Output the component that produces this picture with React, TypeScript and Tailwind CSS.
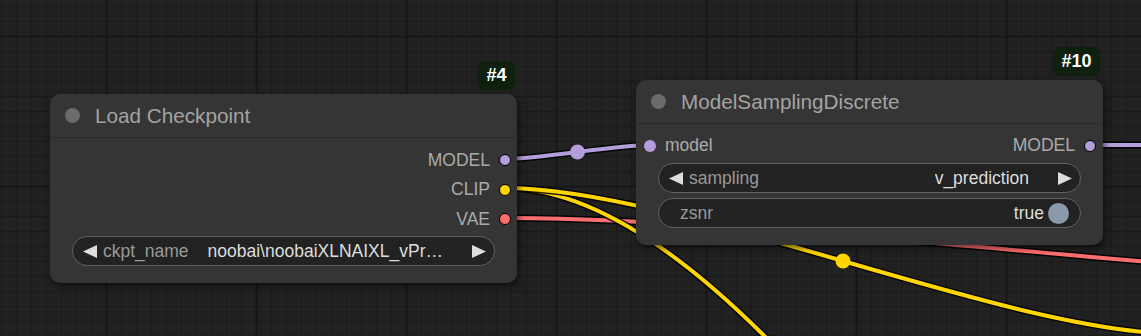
import React from "react";

const font = "font-['Liberation_Sans',Arial,sans-serif]";

function Arrow({ dir }: { dir: "left" | "right" }) {
  return (
    <svg width="14" height="13" viewBox="0 0 14 13" className="shrink-0">
      <polygon points={dir === "left" ? "14,0 14,13 0,6.5" : "0,0 0,13 14,6.5"} fill="#dddddd" />
    </svg>
  );
}

function Grid() {
  return (
    <svg className="absolute inset-0" width="1141" height="336">
      <defs>
        <pattern id="minor" x="1" y="6" width="15" height="15" patternUnits="userSpaceOnUse">
          <rect x="0" y="0" width="1" height="15" fill="#1a1a1a" />
          <rect x="0" y="0" width="15" height="1" fill="#1a1a1a" />
        </pattern>
        <pattern id="major" x="105.5" y="35.5" width="150" height="150" patternUnits="userSpaceOnUse">
          <rect x="0" y="0" width="2" height="150" fill="#161616" />
          <rect x="0" y="0" width="150" height="2" fill="#161616" />
        </pattern>
      </defs>
      <rect width="1141" height="336" fill="#212121" />
      <rect width="1141" height="336" fill="url(#minor)" />
      <rect width="1141" height="336" fill="url(#major)" />
    </svg>
  );
}

const links = [
  { d: "M505,218 C700,218 1000,250 1300,275", color: "#ff6e6e" },
  { d: "M505,188 C600,188 705,268 810,384", color: "#ffd500" },
  { d: "M505,188 C678,188 1008,334 1181,334", color: "#ffd500" },
  { d: "M505,159 C541,159 614,145 650,145", color: "#b39ddb" },
  { d: "M1090,145 L1160,145", color: "#b39ddb" },
];

function Links() {
  return (
    <svg className="absolute inset-0" width="1141" height="336" fill="none">
      {links.map((l, i) => (
        <g key={i}>
          <path d={l.d} stroke="#000000" strokeWidth="7" strokeOpacity="0.85" />
          <path d={l.d} stroke={l.color} strokeWidth="4" />
        </g>
      ))}
      <circle cx="577.5" cy="152" r="7.5" fill="#b39ddb" />
      <circle cx="843" cy="261" r="7.5" fill="#ffd500" />
    </svg>
  );
}

function Badge({ text, className }: { text: string; className: string }) {
  return (
    <div
      className={`absolute flex h-[29px] items-center justify-center rounded-[7px] bg-[#10200f] px-[8px] text-[18px] font-bold text-white ${className}`}
    >
      {text}
    </div>
  );
}

function Header({ title }: { title: string }) {
  return (
    <div className="flex h-[44px] items-center gap-[15px] border-b border-[#2b2b2b] pl-[15px]">
      <span className="h-[15px] w-[15px] rounded-full bg-[#6b6b6b]" />
      <span className="text-[20.7px] text-[#a3a3a3]">{title}</span>
    </div>
  );
}

function OutSlot({ label, dot }: { label: string; dot: string }) {
  return (
    <div className="flex items-center gap-[9px]">
      <span className="text-[17.5px] leading-none text-[#aaaaaa]">{label}</span>
      <span className={`h-[12px] w-[12px] rounded-full border-[1.5px] border-black ${dot}`} />
    </div>
  );
}

function Combo({ label, value }: { label: string; value: string }) {
  return (
    <div className="mx-[22px] flex h-[30px] items-center rounded-full border border-[#616161] bg-[#222222] pl-[10px] pr-[8px] text-[17.5px]">
      <Arrow dir="left" />
      <span className="ml-[6px] text-[#999999]">{label}</span>
      <span className="ml-auto mr-[29px] truncate text-[#dddddd]">{value}</span>
      <Arrow dir="right" />
    </div>
  );
}

export default function App() {
  return (
    <div className={`relative h-[336px] w-[1141px] overflow-hidden ${font}`}>
      <Grid />
      <Links />

      <Badge text="#4" className="left-[478px] top-[61px] w-[37px]" />
      <div className="absolute left-[50px] top-[94px] h-[189px] w-[467px] rounded-[10px] bg-[#353535] shadow-[2px_3px_6px_rgba(0,0,0,0.55)]">
        <Header title="Load Checkpoint" />
        <div className="flex flex-col pt-[7.5px]">
          <div className="flex flex-col items-end pr-[6px]">
            <div className="flex h-[29.5px] items-center">
              <OutSlot label="MODEL" dot="bg-[#b39ddb]" />
            </div>
            <div className="flex h-[29.5px] items-center">
              <OutSlot label="CLIP" dot="bg-[#ffd500]" />
            </div>
            <div className="flex h-[29.5px] items-center">
              <OutSlot label="VAE" dot="bg-[#ff6e6e]" />
            </div>
          </div>
          <div className="mt-[2px]">
            <Combo label="ckpt_name" value={"noobai\\noobaiXLNAIXL_vPr…"} />
          </div>
        </div>
      </div>

      <Badge text="#10" className="left-[1053px] top-[47px] w-[47px]" />
      <div className="absolute left-[636px] top-[80px] h-[165px] w-[467px] rounded-[10px] bg-[#353535] shadow-[2px_3px_6px_rgba(0,0,0,0.55)]">
        <Header title="ModelSamplingDiscrete" />
        <div className="flex flex-col pt-[7px]">
          <div className="flex h-[29.5px] items-center justify-between pl-[8px] pr-[7px]">
            <div className="flex items-center gap-[9px]">
              <span className="h-[12px] w-[12px] rounded-full bg-[#b39ddb]" />
              <span className="text-[17.5px] leading-none text-[#aaaaaa]">model</span>
            </div>
            <OutSlot label="MODEL" dot="bg-[#b39ddb]" />
          </div>
          <div className="mt-[2.5px]">
            <Combo label="sampling" value="v_prediction" />
          </div>
          <div className="mx-[22px] mt-[5px] flex h-[30px] items-center rounded-full border border-[#616161] bg-[#222222] pl-[21px] pr-[11px] text-[17.5px]">
            <span className="text-[#999999]">zsnr</span>
            <span className="ml-auto text-[#dddddd]">true</span>
            <span className="ml-[4px] h-[21px] w-[21px] rounded-full bg-[#8a9aab]" />
          </div>
        </div>
      </div>
    </div>
  );
}
